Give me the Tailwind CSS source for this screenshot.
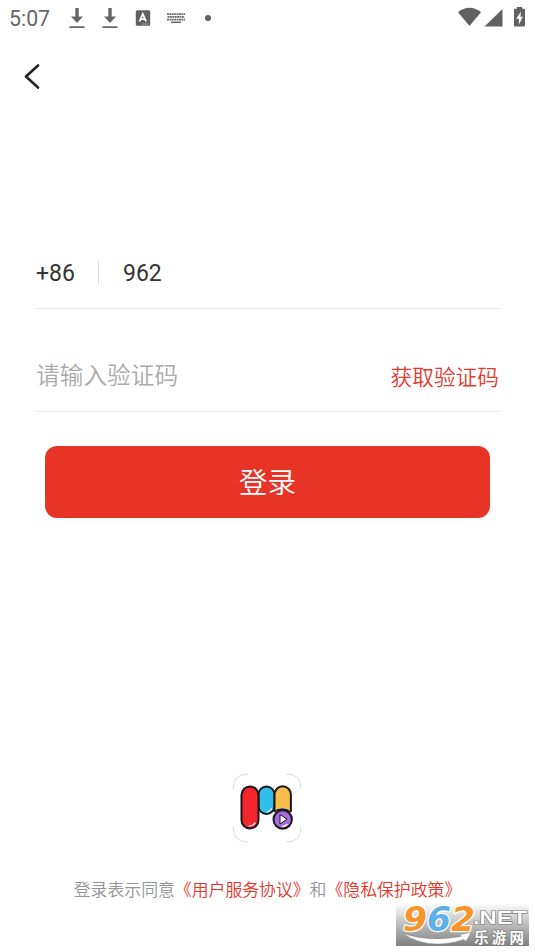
<!DOCTYPE html>
<html lang="zh-CN">
<head>
<meta charset="utf-8">
<title>登录</title>
<script src="https://cdn.jsdelivr.net/npm/@tailwindcss/browser@4"></script>
</head>
<body class="bg-white">
<div class="relative flex h-[952px] w-[535px] flex-col overflow-hidden bg-white font-[Roboto,'Noto_Sans_CJK_SC',sans-serif]">
  <header class="flex h-9 shrink-0 items-center justify-between pl-[9px] pr-[9px]">
    <div class="flex items-center text-[#666]">
      <span class="w-[60px] pt-px text-[21.300px] leading-9">5:07</span>
      <svg class="mr-[17px] h-[22px] w-4" viewBox="0 0 16 22" fill="currentColor"><path d="M6.300 1h3.400v8.500H14l-6 6.500-6-6.500h4.300zM.5 19.200h15V21H.5z"/></svg>
      <svg class="mr-[17px] h-[22px] w-4" viewBox="0 0 16 22" fill="currentColor"><path d="M6.300 1h3.400v8.500H14l-6 6.500-6-6.500h4.300zM.5 19.200h15V21H.5z"/></svg>
      <svg class="mr-[15px] h-4 w-4" viewBox="0 0 16 16"><rect x=".8" y=".3" width="14.400" height="15.400" rx="1.500" fill="#606060"/><path d="M4.500 11.500 7.800 4l3.300 7.500M5.700 9.200h4.200" fill="none" stroke="#fff" stroke-width="1.800"/><path d="M8 14h5" stroke="#ccc" stroke-dasharray="1.200 .8"/></svg>
      <svg class="mr-[19px] h-3 w-5" viewBox="0 0 20 12" fill="none" stroke="#686868" stroke-width="1.700"><path d="M1 2.100h18" stroke-dasharray="1.900 .5"/><path d="M1.500 4.900h17" stroke-dasharray="1.900 .5"/><path d="M1 7.600h18" stroke-dasharray="1.900 .5"/><path d="M5 10.300h10" stroke-width="1.500"/></svg>
      <span class="size-[6px] rounded-full bg-[#606060]"></span>
    </div>
    <svg class="mb-[2px] h-[22px] w-[68px]" viewBox="0 0 68 22" fill="#616161"><path d="M0 6.200C6.500.200 16.500.200 23 6.200L11.500 20z"/><path d="M26.500 20.500 44.500 3v17.500z"/><path d="M58.800 1h5.400v1.700H66q1 0 1 1v15.500q0 1.300-1.300 1.300h-8.400Q56 20.500 56 19.200V3.700q0-1 1-1h1.800z"/><path d="m63 5.500-4.800 7.300h2.700V18.500l4-7.700h-2.500z" fill="#fff"/></svg>
  </header>

  <nav class="flex h-20 shrink-0 items-center pl-6">
    <svg class="h-[26px] w-4" viewBox="0 0 16 26" fill="none" stroke="#222" stroke-width="2.600" stroke-linecap="round" stroke-linejoin="round"><path d="M14 2.500 2 13.500l12 11"/></svg>
  </nav>

  <main class="ml-[36px] mr-[35px] mt-[121px] flex shrink-0 flex-col">
    <div class="flex h-[72px] items-center border-b border-[#e6e6e6] text-[23px] text-[#333]">
      <span class="w-[62px] pt-[4px]">+86</span>
      <span class="h-[25px] w-px bg-[#dfdfdf]"></span>
      <span class="pl-6 pt-[4px]">962</span>
    </div>
    <div class="flex h-[103px] items-center justify-between border-b border-[#ebebeb] pt-[34px]">
      <span class="text-[23.700px] font-[350] text-[#aaa]">请输入验证码</span>
      <span class="pr-px pt-[2px] text-[21.700px] font-[350] text-[#e23c30]">获取验证码</span>
    </div>
    <button class="ml-[9px] mr-[10px] mt-[34px] h-[72px] rounded-[12px] bg-[#e83426] pt-[4px] text-[28.500px] font-[350] text-white">登录</button>
  </main>

  <footer class="mt-[255px] flex shrink-0 flex-col items-center">
    <svg class="mr-[2px] h-[70px] w-[70px]" viewBox="0 0 70 70">
      <g fill="none" stroke="#d0d0d0" stroke-width=".8"><path d="M1 16Q1 1 16 1M54 1Q69 1 69 16M69 54Q69 69 54 69M16 69Q1 69 1 54"/></g>
      <g stroke="#17171b" stroke-width="2">
        <rect x="26.500" y="13.500" width="16" height="27.500" rx="8" fill="#32bdea"/>
        <path d="M42.500 38V21.500a8.200 8.200 0 0 1 16.400 0V38z" fill="#f8bd48"/>
        <rect x="9.500" y="13.500" width="17" height="42" rx="8.500" fill="#f4252c"/>
        <circle cx="50.700" cy="46.500" r="11.500" fill="#fff" stroke="none"/>
        <path d="M42 39q8-6 17 0" fill="none" stroke-width="1.500"/>
        <circle cx="50.700" cy="46.500" r="9.200" fill="#a66bdf"/>
        <path d="m48 41.500 7 4.700-7 4.800z" fill="#fff" stroke-width="1"/>
      </g>
      <g stroke="#fff" stroke-width="1.200" stroke-linecap="round" fill="none"><path d="M17 53q4 0 6-3M35 39q3-.5 4.500-3M50 53.500q3 0 5-2"/></g>
    </svg>
    <p class="mt-[34px] whitespace-nowrap text-[16.850px] font-[350] leading-[26px] text-[#939393]">登录表示同意<span class="text-[#e4352b]">《用户服务协议》</span>和<span class="text-[#e4352b]">《隐私保护政策》</span></p>
  </footer>

  <div class="absolute left-[396px] top-[903px] h-[43px] w-[133px] bg-linear-to-b from-white to-[#808080]">
    <svg class="h-full w-full overflow-visible" viewBox="0 0 133 43">
      <g font-family="DejaVu Sans" font-weight="700" font-style="italic" font-size="33" stroke="#fff" stroke-width="2.500" paint-order="stroke" stroke-linejoin="round">
        <text x="7" y="27.500" textLength="72" lengthAdjust="spacingAndGlyphs"><tspan fill="#f7952b">9</tspan><tspan fill="#5eb0e8">6</tspan><tspan fill="#f7952b">2</tspan></text>
      </g>
      <path d="M7 30.500q27 9 58 3l-1-2 11-2-5 9-2-2Q32 48 7 30.500z" fill="#fff" stroke="#888" stroke-width=".5"/>
      <text x="77" y="20.500" font-family="Liberation Sans" font-weight="700" font-size="18" fill="#fff" stroke="#777" stroke-width="1.200" paint-order="stroke" textLength="54" lengthAdjust="spacingAndGlyphs">.NET</text>
      <text x="78" y="39.500" font-family="Noto Sans CJK SC" font-weight="700" font-size="14.500" fill="#fff" stroke="#777" stroke-width="1.200" paint-order="stroke" textLength="50">乐游网</text>
    </svg>
  </div>
</div>
</body>
</html>
